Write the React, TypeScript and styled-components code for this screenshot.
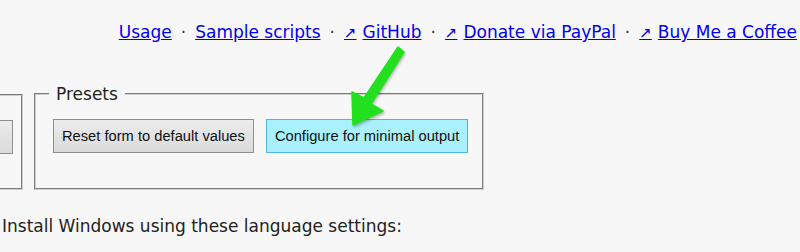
import React from 'react'
import styled, { createGlobalStyle } from 'styled-components'

const GlobalStyle = createGlobalStyle`
  html, body {
    margin: 0;
    padding: 0;
    background: #f7f7f7;
  }
`

const Page = styled.div`
  position: relative;
  width: 800px;
  height: 252px;
  overflow: hidden;
  background: #f7f7f7;
  font-family: 'DejaVu Sans', 'Liberation Sans', sans-serif;
  font-size: 17px;
  color: #222;
`

const Nav = styled.nav`
  display: flex;
  justify-content: flex-end;
  align-items: baseline;
  padding: 22px 3px 0 0;
  height: 25px;
`

const NavLink = styled.a`
  color: #0000ee;
  text-decoration: underline;
  cursor: pointer;
`

const Ext = styled.span`
  font-size: 15px;
  margin-right: 6px;
`

const Dot = styled.span`
  margin: 0 9px;
  color: #333;
`

const FieldRow = styled.div`
  display: flex;
  align-items: stretch;
  gap: 11px;
  margin: 37px 0 0 -104px;
`

const Box = styled.fieldset<{ $pad: string }>`
  margin: 0;
  padding: ${(p) => p.$pad};
  border: 2px groove #cfcfcf;
  min-width: 0;
`

const Side = styled(Box)`
  margin-top: 10px;
  width: 108px;
`

const Legend = styled.legend`
  padding: 0 7px;
  margin-left: -4px;
  line-height: 20px;
`

const Buttons = styled.div`
  display: flex;
  gap: 12px;
`

const Btn = styled.button<{ $primary?: boolean }>`
  height: 34px;
  padding: 0 8px;
  font-family: 'Liberation Sans', Arial, sans-serif;
  font-size: 14.7px;
  color: #111;
  border: 1px solid ${(p) => (p.$primary ? '#4fb4e6' : '#8e8e8e')};
  background: ${(p) =>
    p.$primary ? '#a9f1ff' : 'linear-gradient(#ececec, #dadada)'};
  border-radius: 0;
`

const Stub = styled(Btn)`
  width: 115px;
  margin-left: auto;
`

const Caption = styled.p`
  margin: 26px 0 0 2px;
`

const Arrow = styled.svg`
  position: absolute;
  left: 340px;
  top: 40px;
  width: 80px;
  height: 100px;
  filter: drop-shadow(1px 2px 1px rgba(0, 0, 0, 0.25));
`

const links = [
  { text: 'Usage' },
  { text: 'Sample scripts' },
  { text: 'GitHub', ext: true },
  { text: 'Donate via PayPal', ext: true },
  { text: 'Buy Me a Coffee', ext: true },
]

export default function App() {
  return (
    <Page>
      <GlobalStyle />
      <Nav>
        {links.map((l, i) => (
          <React.Fragment key={l.text}>
            {i > 0 && <Dot>·</Dot>}
            <NavLink>
              {l.ext && <Ext>↗</Ext>}
              {l.text}
            </NavLink>
          </React.Fragment>
        ))}
      </Nav>
      <FieldRow>
        <Side $pad="24px 15px 31px 0">
          <Stub aria-label="more" />
        </Side>
        <Box $pad="15px 14px 31px 17px">
          <Legend>Presets</Legend>
          <Buttons>
            <Btn>Reset form to default values</Btn>
            <Btn $primary>Configure for minimal output</Btn>
          </Buttons>
        </Box>
      </FieldRow>
      <Caption>Install Windows using these language settings:</Caption>
      {/* green pointer arrow drawn over the presets box */}
      <Arrow viewBox="340 40 80 100">
        <polygon
          points="398,47 404,52 371,104 383,111 353,125 352,92 364,98"
          fill="#22e01e"
          strokeLinejoin="round"
          stroke="#22e01e"
          strokeWidth="1.5"
        />
      </Arrow>
    </Page>
  )
}
